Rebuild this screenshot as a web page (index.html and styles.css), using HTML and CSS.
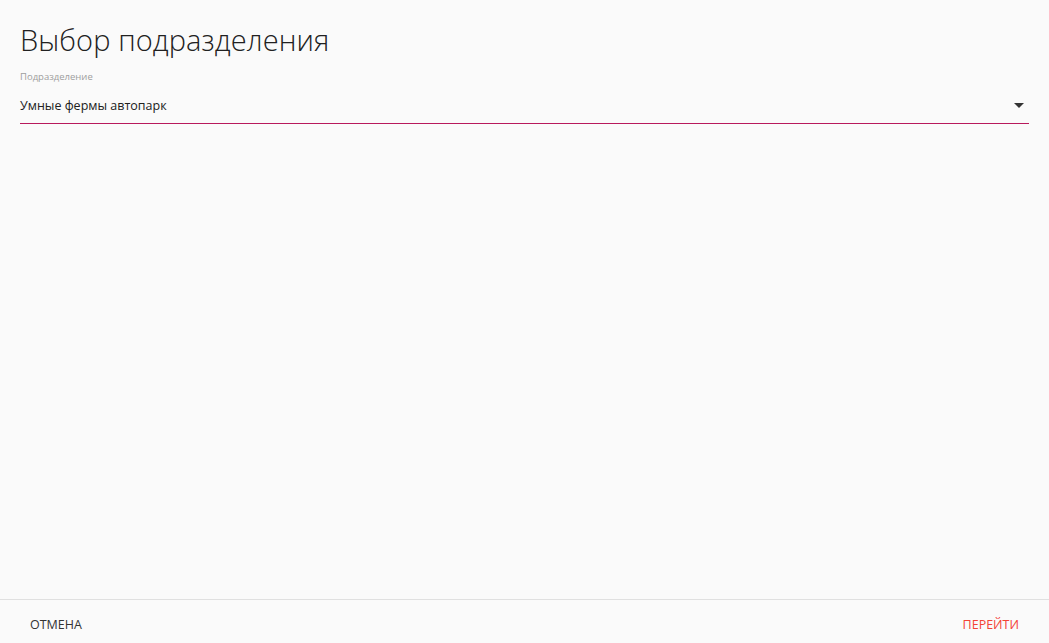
FILE: index.html
```html
<!DOCTYPE html>
<html lang="ru">
<head>
    <meta charset="UTF-8">
    <title>Выбор подразделения</title>
    <link rel="stylesheet" href="styles.css">
</head>
<body>
    <div class="dialog">
        <div class="dialog-content">
            <h1>Выбор подразделения</h1>
            <div class="field">
                <label class="field-label">Подразделение</label>
                <div class="select">
                    <span class="select-value">Умные фермы автопарк</span>
                    <svg class="select-arrow" width="10" height="5" viewBox="0 0 10 5"><path d="M0 0h10L5 5z" fill="#333"/></svg>
                </div>
            </div>
        </div>
        <div class="dialog-actions">
            <button class="btn">Отмена</button>
            <button class="btn btn-primary">Перейти</button>
        </div>
    </div>
</body>
</html>
```

FILE: styles.css
```css
html, body {
    height: 100%;
}
body {
    font-family: "Open Sans", "Noto Sans", sans-serif;
    background-color: #fafafa;
    margin: 0;
    padding: 0;
    color: #212121;
}
.dialog {
    height: 100%;
    display: flex;
    flex-direction: column;
}
.dialog-content {
    flex: 1;
    padding: 20px 20px 0 20px;
}
h1 {
    font-size: 29px;
    font-weight: 300;
    margin: 0;
    line-height: 40px;
    color: #212121;
    letter-spacing: 0.1px;
}
.field {
    margin-top: 10px;
}
.field-label {
    display: block;
    font-size: 9.5px;
    color: #9e9e9e;
    line-height: 14px;
}
.select {
    display: flex;
    align-items: center;
    justify-content: space-between;
    height: 40px;
    padding-top: 4px;
    box-sizing: border-box;
    border-bottom: 1px solid #b8195c;
}
.select-value {
    font-size: 12.5px;
    color: #212121;
}
.select-arrow {
    margin-right: 5px;
}
.dialog-actions {
    border-top: 1px solid #e0e0e0;
    flex: 0 0 44px;
    box-sizing: border-box;
    padding: 6px 20px 0 20px;
    display: flex;
    justify-content: space-between;
    align-items: center;
}
.btn {
    background: none;
    border: none;
    font-family: inherit;
    font-size: 12.5px;
    text-transform: uppercase;
    color: #333;
    padding: 6px 10px;
    cursor: pointer;
}
.btn-primary {
    color: #f44336;
}
```
